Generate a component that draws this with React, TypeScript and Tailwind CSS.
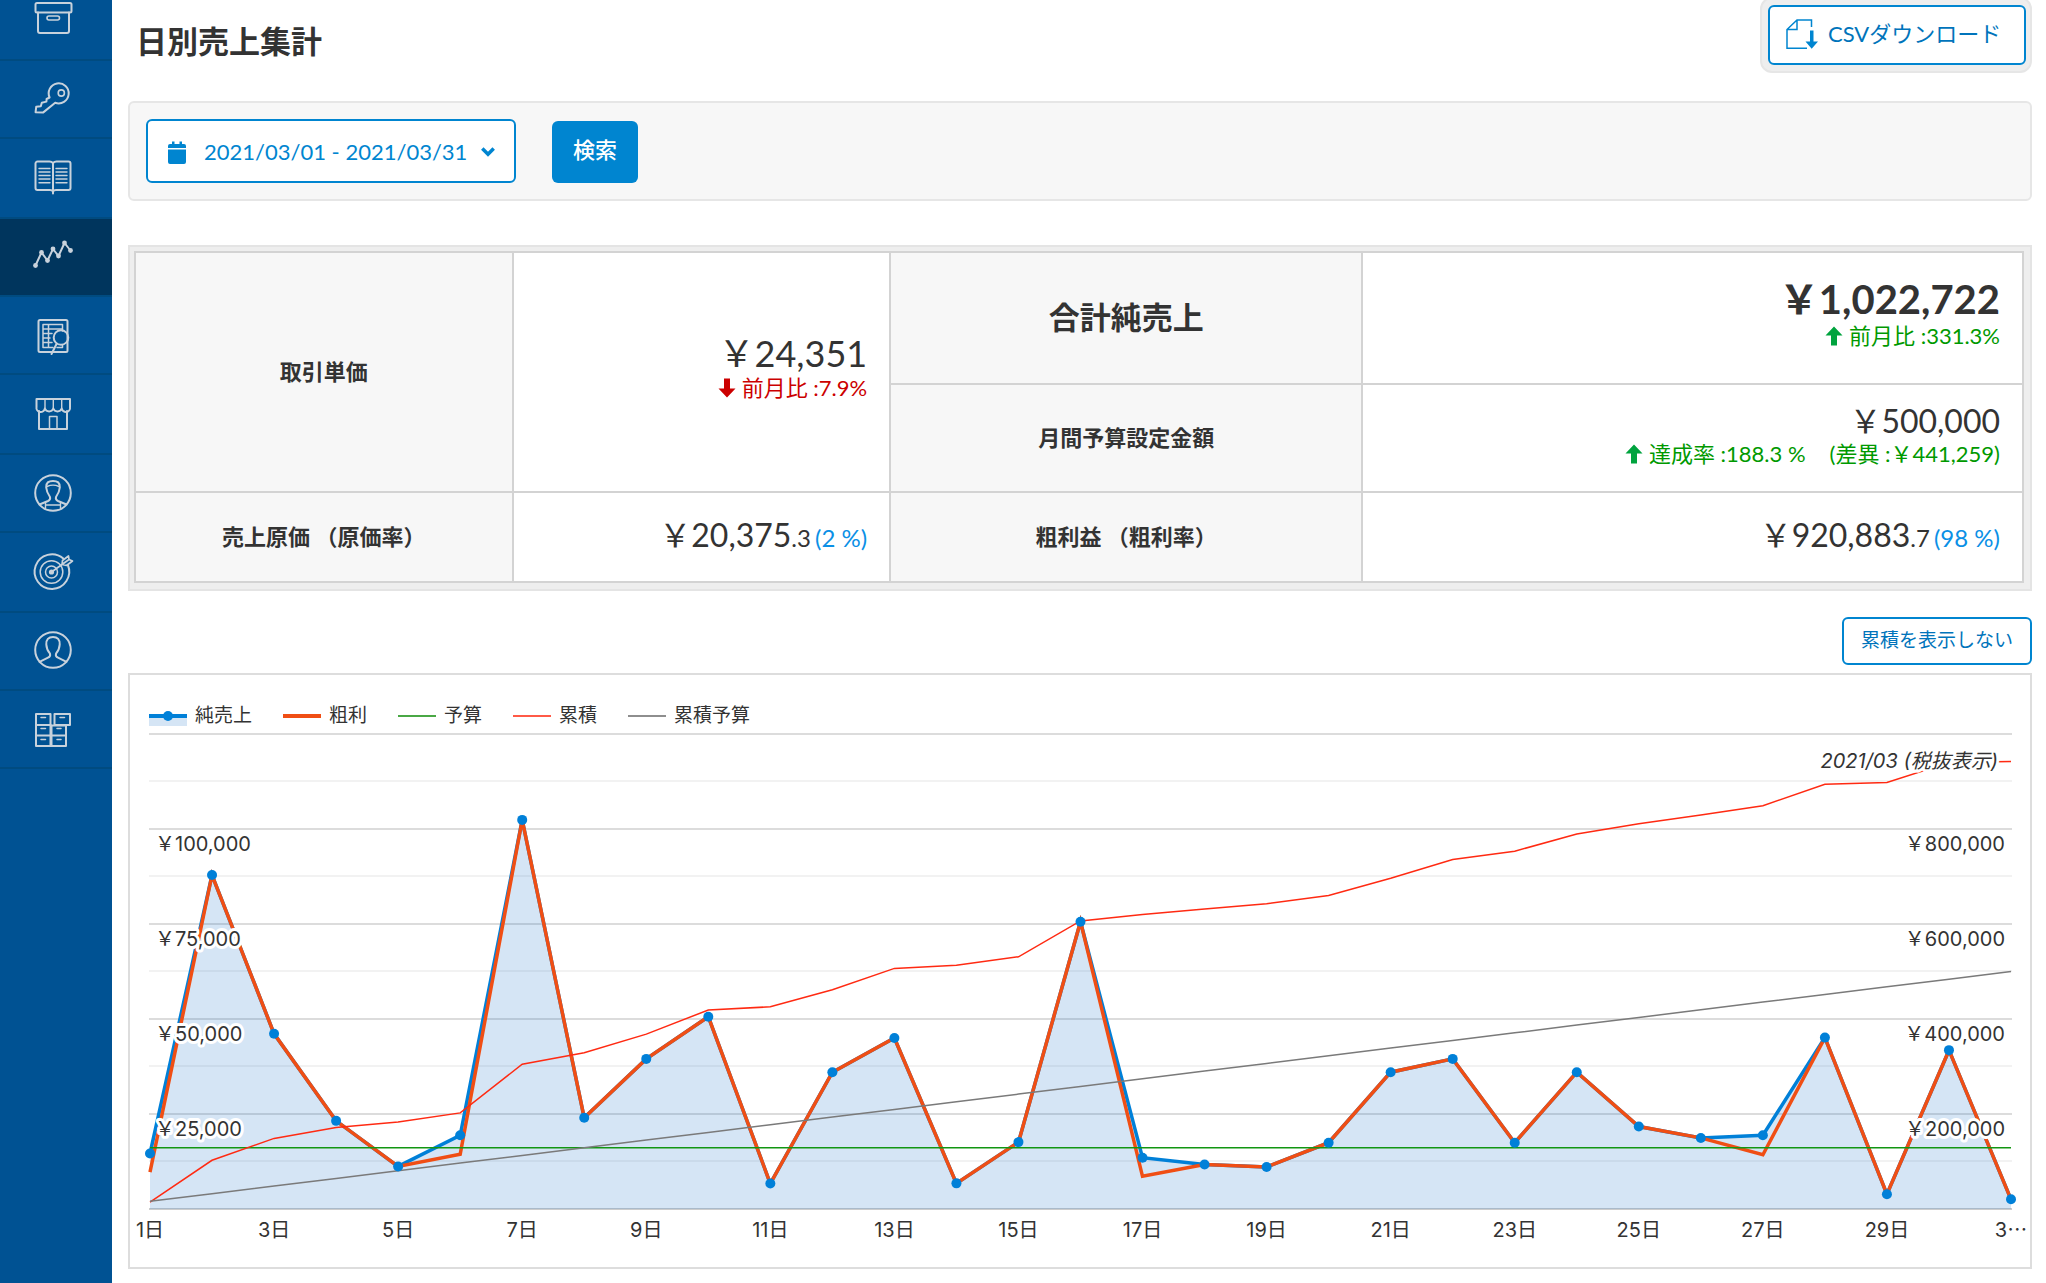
import React from "react";

const DAILY_SALES = [
  14600, 87900, 46100, 23200, 11200, 19400, 102400, 24000, 39500, 50600, 6700,
  36000, 45000, 6750, 17600, 75600, 13500, 11700, 11050, 17450, 36000, 39500,
  17450, 36000, 21700, 18700, 19400, 45100, 3900, 41800, 2550,
];

const PROFIT_OVERRIDES: Record<number, number> = { 0: 9700, 5: 14400, 16: 8600, 26: 14300 };
const DAILY_PROFIT = DAILY_SALES.map((v, i) => PROFIT_OVERRIDES[i] ?? v);
const MONTH_BUDGET = 500000;
const DAYS = DAILY_SALES.length;

const PLOT = { left: 20, right: 1881, top: 4, base: 479, step: 95 };

const px = (i: number) => PLOT.left + (i * (PLOT.right - PLOT.left)) / (DAYS - 1);
const pyLeft = (v: number) => PLOT.base - (v / 25000) * PLOT.step;
const pyRight = (v: number) => PLOT.base - (v / 200000) * PLOT.step;
const toPoints = (values: number[], y: (v: number) => number) =>
  values.map((v, i) => `${px(i).toFixed(1)},${y(v).toFixed(1)}`).join(" ");

const CUMULATIVE = DAILY_SALES.map((_, i) =>
  DAILY_SALES.slice(0, i + 1).reduce((a, b) => a + b, 0)
);
const CUMULATIVE_BUDGET = DAILY_SALES.map((_, i) => (MONTH_BUDGET * (i + 1)) / DAYS);

/* ---------- sidebar icons, drawn on a 40 x 40 grid ---------- */

function BoxIcon() {
  return (
    <>
      <rect x="2.5" y="3" width="36" height="9.5" rx="1.5" />
      <path d="M5 12.5V31a2 2 0 0 0 2 2h27a2 2 0 0 0 2-2V12.5" />
      <rect x="14" y="16" width="12.5" height="4" rx="2" strokeWidth="1.6" />
    </>
  );
}
function KeyIcon() {
  return (
    <>
      <path d="M16.6 18.5a10 10 0 1 1 5.6 5.2L10 33.6l-7.4-.4.6-5.4 4.6-.5 1-3.6 4.6-1.1.2-2.6 3-1.5z" />
      <circle cx="28.3" cy="14" r="3.1" strokeWidth="1.6" />
    </>
  );
}
function BookIcon() {
  return (
    <>
      <path d="M20 5c-1-1-2-1.500-3.500-1.500H4.500A2 2 0 0 0 2.500 5.500V30a2 2 0 0 0 2 2h12.500c1.500 0 2.500.5 3 1.500.5-1 1.500-1.500 3-1.500h12.500a2 2 0 0 0 2-2V5.500a2 2 0 0 0-2-2H23.500C22 3.500 21 4 20 5zM20 5v30.500" />
      <path
        strokeWidth="1.4"
        d="M6 10.500h11M6 14h11M6 17.500h11M6 21h11M6 24.800h11M23 10.500h11M23 14h11M23 17.500h11M23 21h11M23 24.800h11"
      />
    </>
  );
}
const TREND: [number, number][] = [
  [2.5, 28.5], [8.500, 15.5], [14.500, 23.5], [20, 12], [25.500, 19], [31.500, 6], [37.500, 13.5],
];
function TrendIcon() {
  return (
    <>
      <polyline points={TREND.map((p) => p.join(",")).join(" ")} />
      {TREND.map(([x, y]) => (
        <circle key={x} cx={x} cy={y} r="2.400" fill="currentColor" stroke="none" />
      ))}
    </>
  );
}
function ReportIcon() {
  return (
    <>
      <rect x="5.500" y="5" width="29" height="32" rx="1.5" />
      <path
        strokeWidth="1.500"
        d="M29.500 16V9.500H10v23h10M29.500 30v2.500H24M15.500 9.500v23M10 14h19.500M10 18.500h9M10 23h7M10 27.500h9"
      />
      <circle cx="28" cy="22.500" r="7.300" />
      <path d="M23.500 29l-5 10" />
    </>
  );
}
function StoreIcon() {
  return (
    <>
      <path d="M3.500 5h33.500v8a4.100 4.100 0 0 1-8.300 1.500 4.500 4.500 0 0 1-8.400 0 4.500 4.500 0 0 1-8.400 0A4.100 4.100 0 0 1 3.500 13z" />
      <path strokeWidth="1.400" d="M12 5.500V14M20.300 5.500V14M28.700 5.500V14" />
      <path d="M6 17v18h28V17" />
      <path strokeWidth="1.500" d="M16.500 35V22.500h7.500V35" />
    </>
  );
}
function StaffIcon() {
  return (
    <>
      <circle cx="20" cy="20" r="17.800" />
      <path d="M6.500 31.500l8.500-3.500c1.800-.8 2.600-1.800 2-4-2.500-3.500-3.500-5.500-3.800-9.500C13 9.500 15.500 8 20 8s7 1.500 6.800 6.500c-.3 4-1.300 6-3.800 9.500-.6 2.200.2 3.200 2 4l8.500 3.500" />
      <path strokeWidth="1.400" d="M14 13.500c4-1.800 8-1.800 12 0M12.500 29v3h15v-3M12.500 32v3.500M27.500 32v3.500" />
    </>
  );
}
function TargetIcon() {
  return (
    <>
      <path d="M30.300 6.600a17.300 17.300 0 1 0 4.600 6.400" />
      <circle cx="18.500" cy="20" r="11.300" strokeWidth="1.500" />
      <circle cx="18.500" cy="20" r="6" strokeWidth="1.500" />
      <circle cx="18.500" cy="20" r="2.600" fill="currentColor" stroke="none" />
      <path strokeWidth="1.700" d="M18.500 20L36 7.500M29 12.500l.5-4 6-4.500.5 3.500 3.500 1.500-6 4.500z" />
    </>
  );
}
function UserIcon() {
  return (
    <>
      <circle cx="20" cy="19" r="17.800" />
      <path d="M6.500 30.800l8.500-4.100c1.900-.9 2.600-2 2-4-2.600-3-3.500-5.200-3.700-9.200C13 8.500 15.500 6 20 6s7 2.500 6.700 7.500c-.2 4-1.100 6.200-3.700 9.200-.6 2 .1 3.100 2 4l8.500 4.100" />
    </>
  );
}
function DrawersIcon() {
  return (
    <>
      <path d="M3 5h14.500v11H3zM21.500 5H37v11H21.500zM3 16h14.500v10.500H3zM18.500 16.500h14.500v10H18.500zM3 26.500h14.500V37H3zM18.500 26.500h14.500V37H18.500z" />
      <path strokeWidth="1.500" d="M8 8.500h4.500M27 8.500h4.500M8 19.500h4.500M24 19.500h4M8 30.500h4.500M24 30.500h4" />
    </>
  );
}

const NAV = [
  { label: "商品", icon: <BoxIcon />, size: "h-[61px] items-start" },
  { label: "権限", icon: <KeyIcon />, size: "h-[78px] items-center" },
  { label: "帳簿", icon: <BookIcon />, size: "h-20 items-center" },
  { label: "売上分析", icon: <TrendIcon />, size: "h-[78px] items-center", active: true },
  { label: "レポート", icon: <ReportIcon />, size: "h-[78px] items-center" },
  { label: "店舗", icon: <StoreIcon />, size: "h-20 items-center" },
  { label: "スタッフ", icon: <StaffIcon />, size: "h-[78px] items-center" },
  { label: "予算", icon: <TargetIcon />, size: "h-20 items-center" },
  { label: "会員", icon: <UserIcon />, size: "h-[78px] items-center" },
  { label: "在庫", icon: <DrawersIcon />, size: "h-[78px] items-center" },
];

function Sidebar() {
  return (
    <nav className="w-28 shrink-0 bg-[#005293] text-[#c8d2dc]" aria-label="メニュー">
      {NAV.map((n) => (
        <a
          key={n.label}
          href="#"
          aria-label={n.label}
          className={`flex justify-center border-b-2 border-[#004b80] pr-1.5 ${n.size} ${n.active ? "bg-[#00355d]" : ""}`}
        >
          <svg
            viewBox="0 0 40 40"
            className="size-10 overflow-visible"
            fill="none"
            stroke="currentColor"
            strokeWidth="2"
            strokeLinejoin="round"
            strokeLinecap="round"
            aria-hidden="true"
          >
            {n.icon}
          </svg>
        </a>
      ))}
    </nav>
  );
}

function Arrow({ down = false }: { down?: boolean }) {
  return (
    <svg
      viewBox="0 0 18 20"
      className={`mr-1.5 inline-block h-5 w-[18px] align-[-2px] ${down ? "rotate-180 fill-[#c00]" : "fill-[#00a33e]"}`}
      aria-hidden="true"
    >
      <path d="M9 0.500L17.500 9.500H12V19.500H6V9.500H0.500z" />
    </svg>
  );
}

const TH = "border-2 border-[#d3d3d3] bg-[#f7f7f7] text-center text-[22px] font-bold leading-8";
const TD = "border-2 border-[#d3d3d3] bg-white px-[22px] text-right";
const SUB = "text-[22px] leading-[30px]";

function Summary() {
  return (
    <section className="mt-11 border-2 border-[#e4e4e4] bg-[#eee] pt-1 pr-1.5 pb-1.5 pl-1">
      <table className="w-full table-fixed border-collapse">
        <colgroup>
          <col className="w-[20%]" />
          <col className="w-[20%]" />
          <col className="w-[25%]" />
          <col className="w-[35%]" />
        </colgroup>
        <tbody>
          <tr className="h-[132px]">
            <th scope="row" rowSpan={2} className={TH}>取引単価</th>
            <td rowSpan={2} className={`${TD} pb-2`}>
              <div className="text-4xl leading-10">￥24,351</div>
              <div className={`${SUB} text-[#c00]`}>
                <Arrow down />前月比 :7.9%
              </div>
            </td>
            <th scope="row" className={`${TH} pb-0.5`}>
              <span className="text-[31px] leading-10">合計純売上</span>
            </th>
            <td className={`${TD} pb-2`}>
              <div className="text-[40px] leading-[44px] font-bold">￥1,022,722</div>
              <div className={`${SUB} text-[#090]`}>
                <Arrow />前月比 :331.3%
              </div>
            </td>
          </tr>
          <tr className="h-[108px]">
            <th scope="row" className={TH}>月間予算設定金額</th>
            <td className={`${TD} pb-1`}>
              <div className="text-[32px] leading-9">￥500,000</div>
              <div className={`${SUB} text-[#090]`}>
                <Arrow />達成率 :188.3 %<span className="ml-6">(差異 :￥441,259)</span>
              </div>
            </td>
          </tr>
          <tr className="h-[90px]">
            <th scope="row" className={TH}>売上原価 （原価率）</th>
            <td className={`${TD} pb-1`}>
              <span className="text-[32px] leading-9">￥20,375</span>
              <span className="text-2xl">.3</span>{" "}
              <span className="text-2xl text-[#0b90e6]">(2 %)</span>
            </td>
            <th scope="row" className={TH}>粗利益 （粗利率）</th>
            <td className={`${TD} pb-1`}>
              <span className="text-[32px] leading-9">￥920,883</span>
              <span className="text-2xl">.7</span>{" "}
              <span className="text-2xl text-[#0b90e6]">(98 %)</span>
            </td>
          </tr>
        </tbody>
      </table>
    </section>
  );
}

const LEGEND = [
  { label: "純売上", color: "#0080d8", width: 4, area: true },
  { label: "粗利", color: "#f04e14", width: 4 },
  { label: "予算", color: "#4aa845", width: 2 },
  { label: "累積", color: "#ff5a47", width: 2 },
  { label: "累積予算", color: "#8e8e8e", width: 2 },
];

const HALO = "[paint-order:stroke] stroke-white stroke-[6px] [stroke-linejoin:round]";

function Chart() {
  const area = `${PLOT.left},${PLOT.base} ${toPoints(DAILY_SALES, pyLeft)} ${PLOT.right},${PLOT.base}`;
  return (
    <section className="mt-2 border-2 border-[#ddd] bg-white font-['Inter','Noto_Sans_CJK_JP',sans-serif]">
      <ul className="flex h-[55px] items-end gap-[31px] pl-[19px] text-[19px] leading-7">
        {LEGEND.map((l) => (
          <li key={l.label} className="flex items-center gap-2">
            <svg width="38" height="28" viewBox="0 0 38 28" aria-hidden="true">
              {l.area && <rect x="0" y="14" width="38" height="10" fill="#0766c4" fillOpacity="0.17" />}
              <line x1="0" x2="38" y1="14" y2="14" stroke={l.color} strokeWidth={l.width} />
              {l.area && <circle cx="19" cy="14" r="5" fill={l.color} />}
            </svg>
            <span>{l.label}</span>
          </li>
        ))}
      </ul>
      <svg viewBox="0 0 1900 537" className="block w-full" role="img" aria-label="日別売上グラフ">
        {[1, 2, 3, 4, 5].map((n) => (
          <g key={n} strokeWidth="2">
            <line x1="19" x2="1882" y1={PLOT.base - n * PLOT.step} y2={PLOT.base - n * PLOT.step} stroke="#dcdcdc" />
            <line x1="19" x2="1882" y1={PLOT.base + 47 - n * PLOT.step} y2={PLOT.base + 47 - n * PLOT.step} stroke="#f2f2f2" />
          </g>
        ))}
        <line x1="19" x2="1882" y1={PLOT.base} y2={PLOT.base} stroke="#ccc" strokeWidth="2" />
        <polygon points={area} fill="#0766c4" fillOpacity="0.17" />
        <g fill="none">
          <polyline points={toPoints(DAILY_SALES, pyLeft)} stroke="#0080d8" strokeWidth="3.500" />
          <polyline points={toPoints(DAILY_PROFIT, pyLeft)} stroke="#f04e14" strokeWidth="3.500" />
          <line x1={PLOT.left} x2={PLOT.right} y1={pyLeft(MONTH_BUDGET / DAYS)} y2={pyLeft(MONTH_BUDGET / DAYS)} stroke="#129612" strokeWidth="1.500" />
          <polyline points={toPoints(CUMULATIVE, pyRight)} stroke="#ff2a12" strokeWidth="1.500" />
          <polyline points={toPoints(CUMULATIVE_BUDGET, pyRight)} stroke="#7a7a7a" strokeWidth="1.500" />
        </g>
        {DAILY_SALES.map((v, i) => (
          <circle key={i} cx={px(i)} cy={pyLeft(v)} r="5" fill="#0080d8" />
        ))}
        <g className="fill-[#333] text-[20px]">
          <text x="1868" y="38" textAnchor="end" className={`${HALO} italic`}>2021/03 (税抜表示)</text>
          {[1, 2, 3, 4].map((n) => (
            <g key={n}>
              <text x="25" y={PLOT.base - n * PLOT.step + 22} className={HALO}>
                ￥{(n * 25000).toLocaleString("en-US")}
              </text>
              <text x="1875" y={PLOT.base - n * PLOT.step + 22} textAnchor="end" className={HALO}>
                ￥{(n * 200000).toLocaleString("en-US")}
              </text>
            </g>
          ))}
          {DAILY_SALES.map((_, i) =>
            i % 2 === 0 && i < DAYS - 1 ? (
              <text key={i} x={px(i)} y="507" textAnchor="middle">{`${i + 1}日`}</text>
            ) : null
          )}
          <text x={PLOT.right} y="507" textAnchor="middle">3⋯</text>
        </g>
      </svg>
    </section>
  );
}

export default function App() {
  return (
    <div className="flex min-h-screen bg-white font-['Lato','Noto_Sans_CJK_JP',sans-serif] text-[#333]" lang="ja">
      <Sidebar />
      <main className="min-w-0 flex-1 pr-3.5 pb-3.5 pl-4">
        <header className="-mt-[3px] flex items-center justify-between">
          <h1 className="pt-3 pl-2 text-[31px] leading-10 font-bold">日別売上集計</h1>
          <div className="rounded-xl border-2 border-[#e6e6e6] bg-[#eee] py-1.5 pr-1 pl-1.5">
            <button
              type="button"
              className="flex h-[60px] w-[258px] items-center rounded-md border-2 border-[#0085d0] bg-white pb-0.5 pl-4 text-[22px] leading-8 whitespace-nowrap text-[#0074bb]"
            >
              <svg viewBox="0 0 32 30" className="mr-2.5 h-[30px] w-8" fill="none" stroke="#0085d0" strokeWidth="1.500" aria-hidden="true">
                <path d="M21 29.200H1V10.500L11 1H25.500V8M11 1V10.500H1" />
                <path d="M24 11.500h3.500v11h4.500L25.700 29.800 19.500 22.500H24z" fill="#0085d0" stroke="none" />
              </svg>
              CSVダウンロード
            </button>
          </div>
        </header>

        <form
          className="mt-7 flex h-[100px] items-center rounded-md border-2 border-[#e6e6e6] bg-[#f7f7f7] px-4"
          onSubmit={(e) => e.preventDefault()}
        >
          <button
            type="button"
            aria-haspopup="dialog"
            className="flex h-16 w-[370px] items-center rounded-md border-2 border-[#0085d0] bg-white pt-0.5 pl-5 text-[22px] leading-8 whitespace-nowrap text-[#0085d0]"
          >
            <svg viewBox="0 0 18 23" className="h-[23px] w-[18px]" fill="#0085d0" aria-hidden="true">
              <path d="M2 3H4V0.500H6.500V3H11.500V0.500H14V3H16a2 2 0 0 1 2 2V7H0V5A2 2 0 0 1 2 3zM0 8.500H18V21a2 2 0 0 1-2 2H2a2 2 0 0 1-2-2z" />
            </svg>
            <span className="ml-[18px]">2021/03/01 - 2021/03/31</span>
            <svg viewBox="0 0 14 10" className="ml-3.5 h-2.5 w-3.5" fill="none" stroke="#0085d0" strokeWidth="3.500" aria-hidden="true">
              <path d="M1.300 1.500L7 7.200 12.700 1.500" />
            </svg>
          </button>
          <button
            type="submit"
            className="mt-0.5 ml-9 h-[62px] w-[86px] rounded-md bg-[#0085d0] pb-1 text-[22px] leading-8 font-medium text-white"
          >
            検索
          </button>
        </form>

        <Summary />

        <div className="mt-[26px] flex justify-end">
          <button
            type="button"
            className="h-12 rounded-md border-2 border-[#0085d0] bg-white px-[17px] pb-0.5 text-[19px] leading-7 text-[#0074bb]"
          >
            累積を表示しない
          </button>
        </div>

        <Chart />
      </main>
    </div>
  );
}
